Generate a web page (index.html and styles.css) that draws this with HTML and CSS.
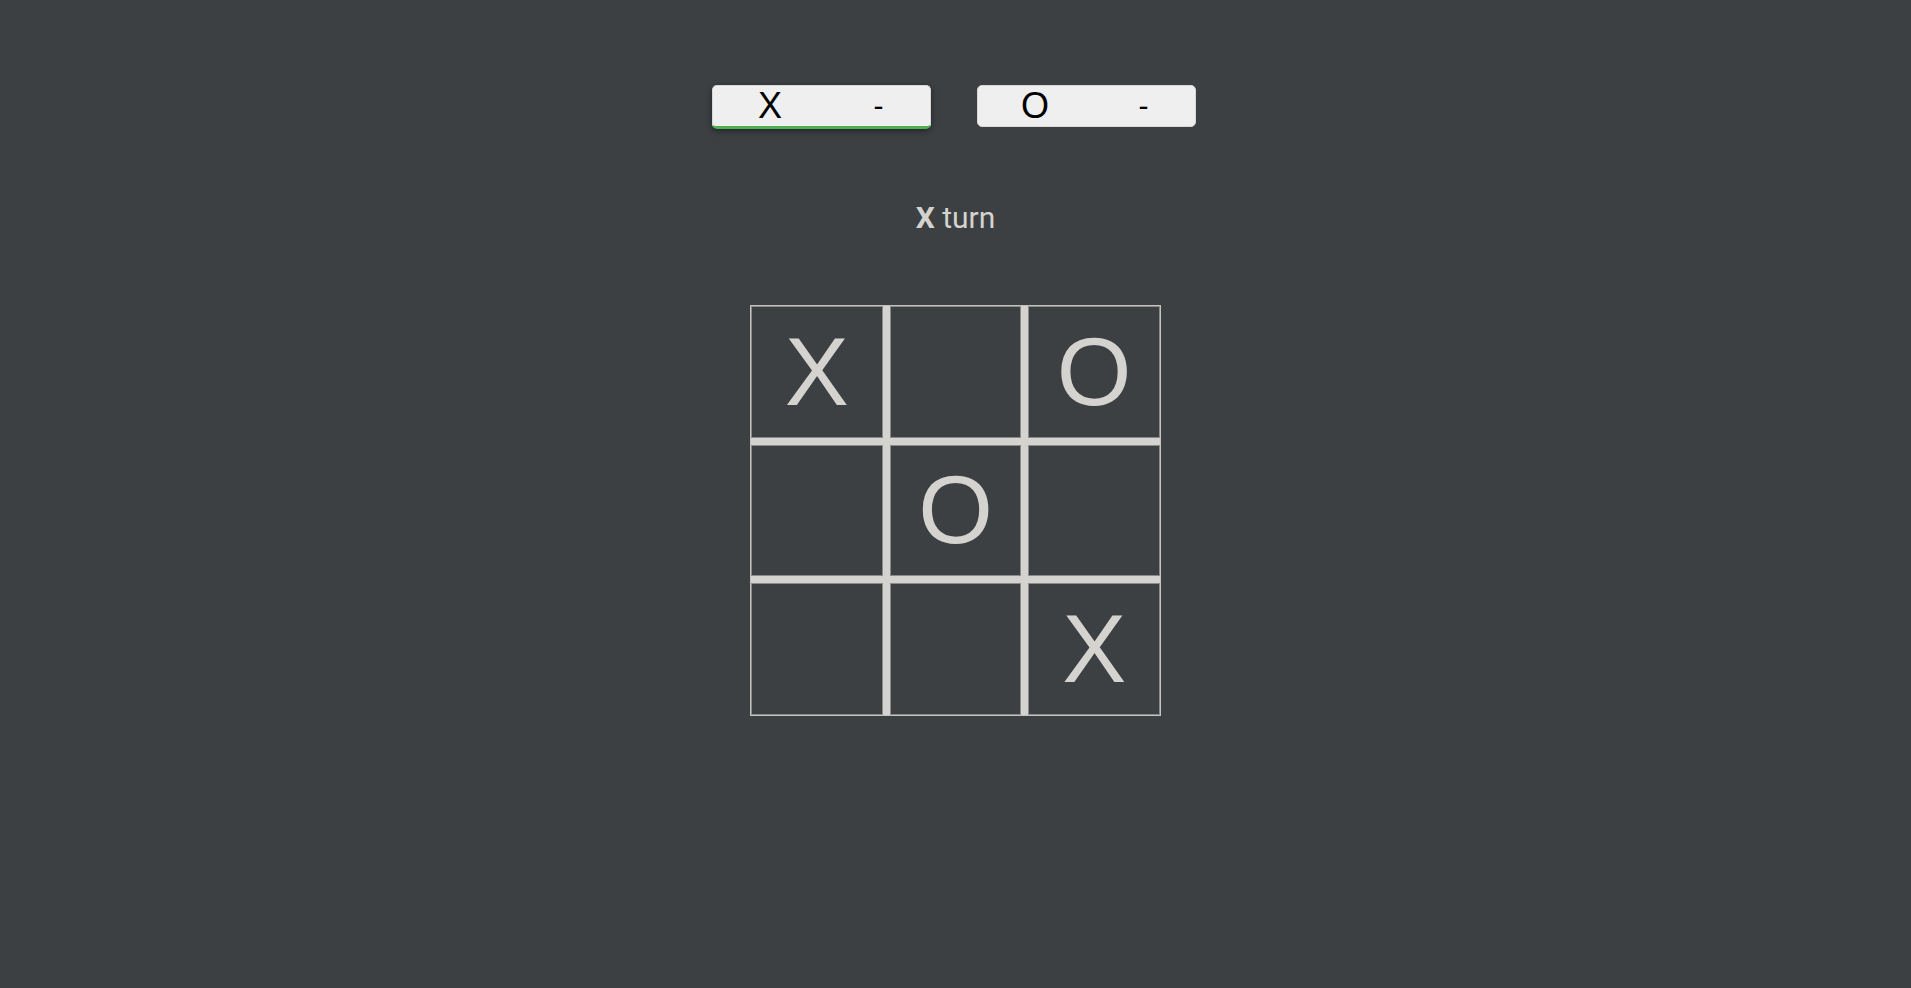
FILE: index.html
```html
<!DOCTYPE html>
<html lang="en">
<head>
<meta charset="utf-8">
<title>Tic Tac Toe</title>
<link rel="stylesheet" href="styles.css">
</head>
<body>
<div class="app">
  <div class="scores">
    <div class="score active"><span class="mark">X</span><span class="count">-</span></div>
    <div class="score"><span class="mark">O</span><span class="count">-</span></div>
  </div>
  <p class="turn"><b>X</b> turn</p>
  <div class="board">
    <div class="cell">X</div>
    <div class="cell"></div>
    <div class="cell">O</div>
    <div class="cell"></div>
    <div class="cell">O</div>
    <div class="cell"></div>
    <div class="cell"></div>
    <div class="cell"></div>
    <div class="cell">X</div>
  </div>
</div>
</body>
</html>
```

FILE: styles.css
```css
html, body {
  margin: 0;
  padding: 0;
  background: #3c4043;
  height: 100%;
}

.app {
  padding-top: 85px;
  display: flex;
  flex-direction: column;
  align-items: center;
}

.scores {
  display: flex;
  justify-content: center;
  align-items: flex-start;
  gap: 46px;
  padding-right: 3px;
}

.score {
  box-sizing: border-box;
  width: 219px;
  height: 42px;
  background: #efefef;
  border: 1px solid #d8d8d8;
  border-radius: 5px;
  display: grid;
  grid-template-columns: 114px 1fr;
  align-items: center;
  text-align: center;
  font-family: "Liberation Sans", Arial, sans-serif;
  font-size: 36px;
  line-height: 1;
  color: #000;
}

.score .count {
  font-size: 30px;
}

.score.active {
  height: 44px;
  border-bottom: 3px solid #4caf50;
  box-shadow: 0 2px 6px rgba(0, 0, 0, 0.45);
}

.turn {
  margin: 71px 0 0 0;
  font-family: Roboto, "Liberation Sans", sans-serif;
  font-size: 30px;
  line-height: 35px;
  color: #d5d3cf;
}

.turn b {
  font-weight: 700;
}

.board {
  box-sizing: border-box;
  margin-top: 70px;
  width: 411px;
  height: 411px;
  display: grid;
  grid-template-columns: repeat(3, 1fr);
  grid-template-rows: repeat(3, 1fr);
  gap: 7px;
  background: #d5d3cf;
  border: 1px solid #c4c3c0;
}

.cell {
  box-sizing: border-box;
  background: #3c4043;
  border: 1px solid #8a8b8a;
  display: flex;
  align-items: center;
  justify-content: center;
  font-family: "Liberation Sans", Arial, sans-serif;
  font-size: 96px;
  line-height: 1;
  color: #d5d3cf;
}
```
